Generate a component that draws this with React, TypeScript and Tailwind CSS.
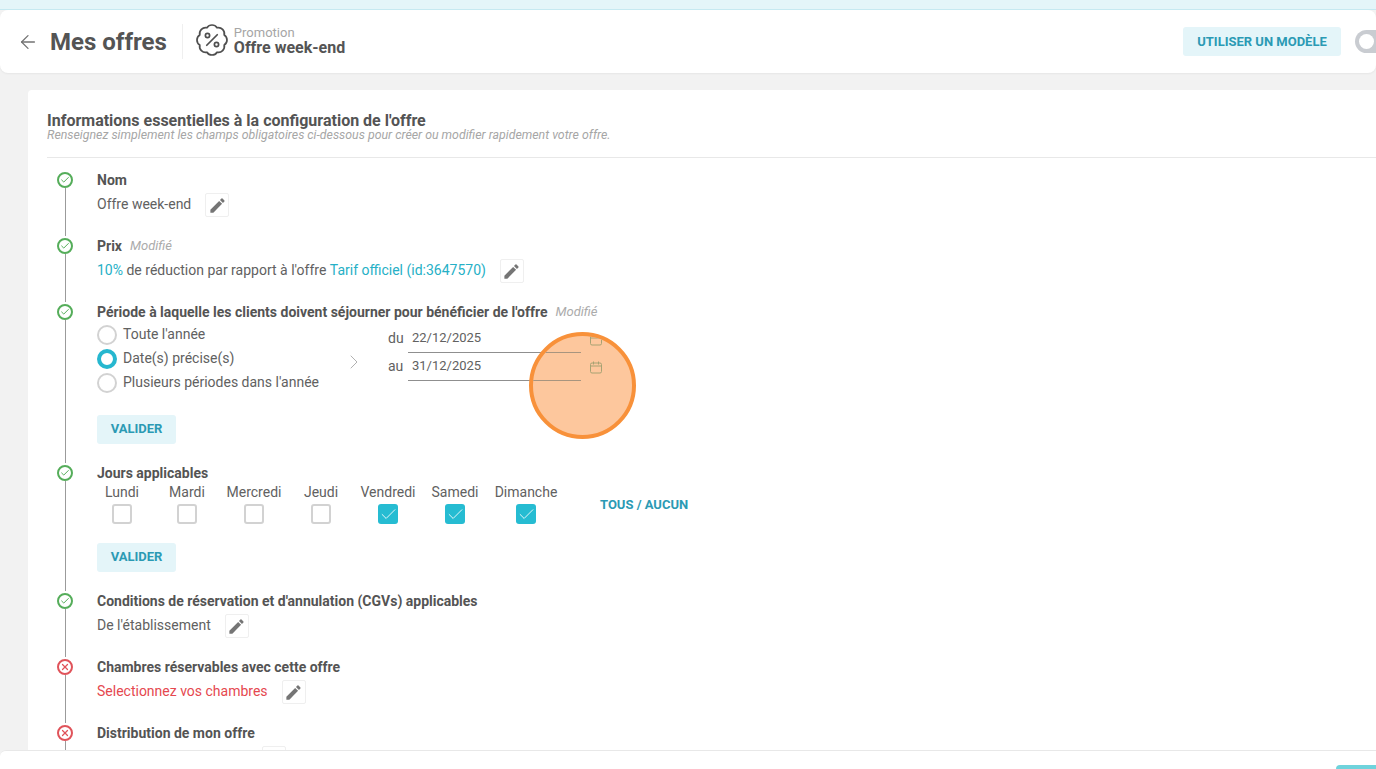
import { ArrowLeft, Check, ChevronRight, X } from "lucide-react";

const font = { fontFamily: "Roboto, 'Liberation Sans', sans-serif" };

function PencilBtn() {
  return (
    <span className="ml-[14px] mt-[2px] flex h-[24px] w-[24px] items-center justify-center rounded-[2px] border border-[#efefef] bg-white">
      <svg viewBox="0 0 24 24" className="h-[19px] w-[19px] fill-[#757575]">
        <path d="M3 17.25V21h3.75L17.81 9.94l-3.75-3.75L3 17.25zM20.71 7.04a1 1 0 0 0 0-1.41l-2.34-2.34a1 1 0 0 0-1.41 0l-1.83 1.83 3.75 3.75 1.83-1.83z" />
      </svg>
    </span>
  );
}

function Status({ ok = true }: { ok?: boolean }) {
  return (
    <span className={`z-10 flex h-[16px] w-[16px] shrink-0 items-center justify-center rounded-full border-2 bg-white ${ok ? "border-[#55ad5a] text-[#55ad5a]" : "border-[#e0535a] text-[#e0535a]"}`}>
      {ok ? <Check size={10} strokeWidth={2.4} /> : <X size={10} strokeWidth={3} />}
    </span>
  );
}

function Row({ ok = true, title, note, children }: { ok?: boolean; title: string; note?: string; children: React.ReactNode }) {
  return (
    <div className="flex">
      <div className="mr-[14px] flex w-[36px] shrink-0 flex-col items-center pt-[2px]">
        <Status ok={ok} />
        <div className="w-px flex-1 bg-[#9b9b9b]" />
      </div>
      <div className="min-w-0 flex-1 pb-[19px]">
        <div className="flex h-[20px] items-center text-[14px] font-bold text-[#545454]">
          {title}
          {note && <span className="ml-[8px] text-[13px] font-normal italic text-[#ababab]">{note}</span>}
        </div>
        {children}
      </div>
    </div>
  );
}

function Value({ className = "text-[#616161]", children }: { className?: string; children: React.ReactNode }) {
  return <div className={`mt-[1px] flex h-[26px] items-center text-[14px] ${className}`}>{children}</div>;
}

function Valider() {
  return (
    <button className="h-[29px] w-[79px] rounded-[3px] bg-[#e4f5f9] pb-[2px] text-[13px] font-bold text-[#2b9ab4]">VALIDER</button>
  );
}

function Radio({ label, on }: { label: string; on?: boolean }) {
  return (
    <div className="flex h-[24px] items-center gap-[6px]">
      <span className={`mt-[2px] h-[20px] w-[20px] rounded-full bg-white ${on ? "border-[4px] border-[#26b7cf]" : "border-2 border-[#d2d2d2]"}`} />
      <span className="text-[14px] leading-none text-[#616161]">{label}</span>
    </div>
  );
}

function Day({ label, on, w }: { label: string; on?: boolean; w: string }) {
  return (
    <div className={`flex flex-col items-center ${w}`}>
      <span className="h-[21px] whitespace-nowrap text-[14px] leading-[18px] text-[#616161]">{label}</span>
      <span className={`flex h-[20px] w-[20px] items-center justify-center rounded-[3px] ${on ? "bg-[#26bcd2] text-white" : "border-2 border-[#d2d2d2] bg-white"}`}>
        {on && <Check size={19} strokeWidth={1.1} />}
      </span>
    </div>
  );
}

function Cal({ className }: { className: string }) {
  return (
    <svg viewBox="0 0 12 13" className={`absolute h-[13px] w-[12px] fill-none stroke-[#a7a273] ${className}`} strokeWidth="1">
      <rect x="0.5" y="2" width="11" height="10" rx="1.5" />
      <path d="M0.5 5h11M3.5 0.5v3M8.5 0.5v3" />
    </svg>
  );
}

function DateField({ label, value }: { label: string; value: string }) {
  return (
    <div className="flex h-[28px] items-start">
      <span className="mt-[3px] w-[20px] text-[14px] leading-[20px] text-[#616161]">{label}</span>
      <div className="h-[28px] w-[173px] border-b border-[#8f8f8f] pl-[4px] pt-[3px] text-[13px] leading-[20px] text-[#616161]">{value}</div>
    </div>
  );
}

export default function App() {
  return (
    <div style={font} className="relative flex h-[769px] w-[1376px] flex-col overflow-hidden bg-[#f2f2f2]">
      <div className="h-[10px] shrink-0 border-b border-[#c6e9f1] bg-[#e4f5f9]" />

      <header className="flex h-[63px] shrink-0 items-center rounded-[8px] bg-white pl-[17px] shadow-[0_1px_2px_rgba(0,0,0,0.05)]">
        <ArrowLeft size={22} strokeWidth={1.4} className="text-[#737373]" />
        <h1 className="ml-[11px] text-[24px] font-bold text-[#545454]">Mes offres</h1>
        <div className="ml-[15px] h-[35px] w-px bg-[#efefef]" />
        <svg viewBox="0 0 24 24" className="-mt-[3px] ml-[11px] h-[36px] w-[36px] fill-none stroke-[#4f4f4f]" strokeWidth="1.15" strokeLinecap="round" strokeLinejoin="round">
          <path d="M3.85 8.62a4 4 0 0 1 4.78-4.77 4 4 0 0 1 6.74 0 4 4 0 0 1 4.78 4.78 4 4 0 0 1 0 6.74 4 4 0 0 1-4.77 4.78 4 4 0 0 1-6.75 0 4 4 0 0 1-4.78-4.77 4 4 0 0 1 0-6.76Z" />
          <path d="m15.5 8.5-7 7" />
          <circle cx="9" cy="9" r="1.4" />
          <circle cx="15" cy="15" r="1.4" />
        </svg>
        <div className="-mt-[3px] ml-[4px] flex flex-col">
          <span className="text-[13px] leading-[15px] text-[#a6a6a6]">Promotion</span>
          <span className="text-[16px] font-bold leading-[16px] text-[#545454]">Offre week-end</span>
        </div>
        <div className="ml-auto flex items-center">
          <button className="h-[29px] w-[158px] rounded-[3px] bg-[#e4f5f9] text-[13px] font-bold text-[#2b9ab4]">UTILISER UN MODÈLE</button>
          <span className="-mr-[19px] ml-[14px] flex h-[23px] w-[40px] items-center rounded-full bg-[#c9ccd1] pl-[4px]">
            <span className="h-[15px] w-[15px] rounded-full bg-white" />
          </span>
        </div>
      </header>

      <main className="min-h-0 flex-1 overflow-hidden pl-[28px] pt-[17px]">
        <section className="rounded-tl-[4px] bg-white pl-[19px] pt-[23px]">
          <div className="h-[45px] border-b border-[#e8e8e8]">
            <h2 className="text-[16px] font-bold leading-[16px] text-[#545454]">Informations essentielles à la configuration de l'offre</h2>
            <p className="text-[12.35px] italic leading-[12px] text-[#a6a6a6]">Renseignez simplement les champs obligatoires ci-dessous pour créer ou modifier rapidement votre offre.</p>
          </div>

          <div className="pt-[12px]">
            <Row title="Nom">
              <Value>Offre week-end<PencilBtn /></Value>
            </Row>
            <Row title="Prix" note="Modifié">
              <Value>
                <span className="text-[#26b0c6]">10%</span>
                <span className="whitespace-pre"> de réduction par rapport à l'offre </span>
                <span className="text-[#26b0c6]">Tarif officiel (id:3647570)</span>
                <PencilBtn />
              </Value>
            </Row>
            <Row title="Période à laquelle les clients doivent séjourner pour bénéficier de l'offre" note="Modifié">
              <div className="flex h-[72px]">
                <div className="w-[245px]">
                  <Radio label="Toute l'année" />
                  <Radio on label="Date(s) précise(s)" />
                  <Radio label="Plusieurs périodes dans l'année" />
                </div>
                <ChevronRight size={24} strokeWidth={0.9} className="mt-[28px] text-[#a8a8a8]" />
                <div className="ml-[22px] mt-[3px]">
                  <DateField label="du" value="22/12/2025" />
                  <DateField label="au" value="31/12/2025" />
                </div>
              </div>
              <div className="mt-[21px] flex"><Valider /></div>
            </Row>
            <Row title="Jours applicables">
              <div className="flex h-[41px] items-start">
                <div className="flex">
                  <Day label="Lundi" w="w-[50px]" />
                  <Day label="Mardi" w="w-[80px]" />
                  <Day label="Mercredi" w="w-[54px]" />
                  <Day label="Jeudi" w="w-[80px]" />
                  <Day label="Vendredi" w="w-[54px]" on />
                  <Day label="Samedi" w="w-[80px]" on />
                  <Day label="Dimanche" w="w-[62px]" on />
                </div>
                <span className="ml-[43px] mt-[14px] text-[13px] font-bold leading-[15px] text-[#2b9ab4]">TOUS / AUCUN</span>
              </div>
              <div className="mt-[19px] flex"><Valider /></div>
            </Row>
            <Row title="Conditions de réservation et d'annulation (CGVs) applicables">
              <Value>De l'établissement<PencilBtn /></Value>
            </Row>
            <Row ok={false} title="Chambres réservables avec cette offre">
              <Value className="text-[#e5484f]">Selectionnez vos chambres<PencilBtn /></Value>
            </Row>
            <Row ok={false} title="Distribution de mon offre">
              <Value><span className="w-[151px]" /><PencilBtn /></Value>
            </Row>
          </div>
        </section>
      </main>

      <footer className="h-[19px] shrink-0 overflow-hidden rounded-tl-[6px] border-t border-[#e8e8e8] bg-white">
        <div className="ml-[1336px] mt-[14px] h-[10px] w-[60px] rounded-tl-[4px] bg-[#6fd3dc]" />
      </footer>

      {/* Click highlight over the date picker */}
      <div className="absolute left-[529px] top-[332px] h-[107px] w-[107px] overflow-hidden rounded-full border-[4px] border-[#f8913a] bg-[#fdc79d]">
        <div className="absolute left-0 top-[16px] h-px w-[48px] bg-[#a8957f]" />
        <div className="absolute left-0 top-[44px] h-px w-[48px] bg-[#a8957f]" />
        <Cal className="left-[57px] top-[-3px]" />
        <Cal className="left-[57px] top-[25px]" />
      </div>
    </div>
  );
}
